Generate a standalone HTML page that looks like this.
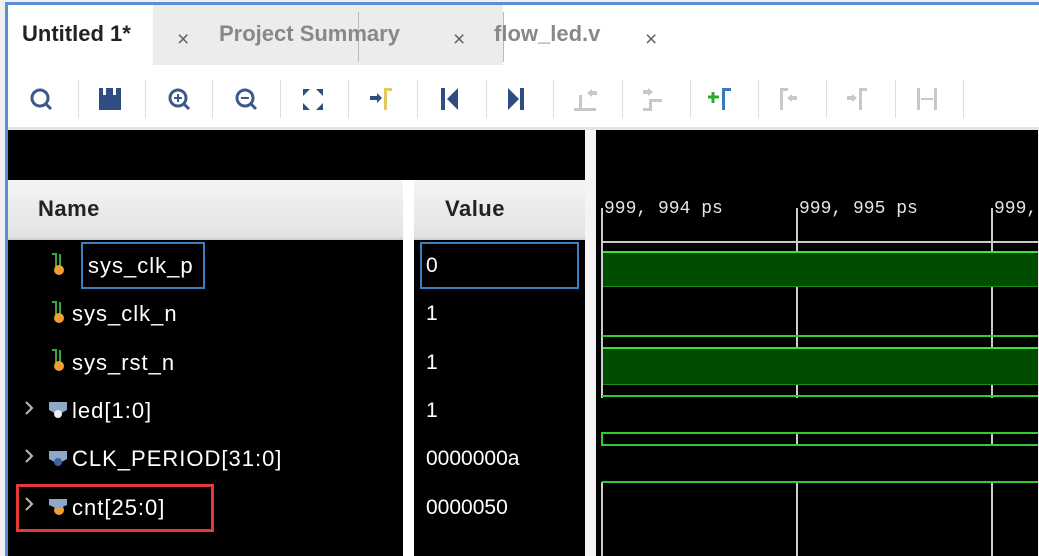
<!DOCTYPE html>
<html><head><meta charset="utf-8"><style>
*{margin:0;padding:0;box-sizing:border-box}
body{width:1039px;height:556px;overflow:hidden;background:#f0f0f0;font-family:"Liberation Sans",Arial,sans-serif;position:relative}
.a{position:absolute}
.tab{position:absolute;top:5px;height:60px;font-size:22px;line-height:58px;font-weight:bold;white-space:nowrap}
.x{position:absolute;font-size:21px;color:#666;top:28px}
.sep{position:absolute;top:80px;width:1px;height:38px;background:#ddd}
.row{position:absolute;font-size:22px;letter-spacing:1px;color:#fff;height:30px;line-height:30px;white-space:nowrap}
.v{position:absolute;left:426px;font-size:21px;color:#fff}
.gl{position:absolute;background:#2ecc2e;height:2px}
.vl{position:absolute;width:2px;background:#ccc}
.t{position:absolute;top:199px;font-family:'Liberation Mono',monospace;font-size:18px;color:#e4e4e4;white-space:nowrap}
</style></head><body>
<div class="a" style="left:5px;top:2px;width:1034px;height:3px;background:#5b8fd5"></div>
<div class="a" style="left:5px;top:2px;width:3px;height:554px;background:#5b8fd5"></div>
<!-- tabs -->
<div class="a" style="left:8px;top:5px;width:1031px;height:60px;background:#fff"></div>
<div class="a" style="left:153px;top:5px;width:350px;height:60px;background:#ececec"></div>
<div class="a" style="left:358px;top:12px;width:1px;height:50px;background:#bbb"></div>
<div class="a" style="left:503px;top:12px;width:1px;height:50px;background:#bbb"></div>
<div class="tab" style="left:22px;color:#222">Untitled 1*</div>
<div class="tab" style="left:219px;color:#888">Project Summary</div>
<div class="tab" style="left:494px;color:#888">flow_led.v</div>
<div class="x" style="left:177px">×</div>
<div class="x" style="left:453px">×</div>
<div class="x" style="left:645px">×</div>
<!-- toolbar -->
<div class="a" style="left:8px;top:65px;width:1031px;height:63px;background:#fff"></div>
<div class="a" style="left:8px;top:127px;width:1031px;height:3px;background:#e4e4e4"></div>
<svg class="a" style="left:0;top:80px" width="1039" height="40" viewBox="0 80 1039 40">
<g fill="none" stroke="#3b5a8c" stroke-width="3">
<circle cx="40" cy="98" r="8"/><line x1="46" y1="104" x2="51" y2="109"/>
<circle cx="178" cy="98" r="8"/><line x1="184" y1="104" x2="189" y2="109"/>
<circle cx="245" cy="98" r="8"/><line x1="251" y1="104" x2="256" y2="109"/>
</g>
<path d="M174 98h8M178 94v8M241 98h8" stroke="#3b5a8c" stroke-width="2"/>
<path d="M99 88h22v22h-22z" fill="#2f4d80"/><rect x="103" y="88" width="3" height="7" fill="#fff"/><rect x="113" y="88" width="3" height="7" fill="#fff"/>
<g fill="#2f4d80"><path d="M303 89h7l-7 7zM323 89h-7l7 7zM303 110h7l-7-7zM323 110h-7l7-7z"/></g>
<path d="M370 96h7v-3l5 5-5 5v-3h-7z" fill="#2f4d80"/><rect x="384" y="88" width="3" height="22" fill="#e5c85c"/><rect x="384" y="88" width="8" height="3" fill="#e5c85c"/>
<rect x="441" y="88" width="4" height="22" fill="#2f4d80"/><path d="M458 88v22l-11-11z" fill="#2f4d80"/>
<path d="M508 88v22l11-11z" fill="#2f4d80"/><rect x="520" y="88" width="4" height="22" fill="#2f4d80"/>
<g fill="#c8c8c8"><path d="M574 108h22v3h-22zM579 95h3v14h-3zM587 93l5-4v8zM591 91h6v4h-6z"/>
<path d="M643 108h8v3h-8zM649 99h3v12h-3zM650 99h12v3h-12zM643 90h6v4h-6zM648 88l5 4-5 4z"/>
<path d="M780 88h3v22h-3zM780 88h8v3h-8zM787 98l5-4v8zM791 96h6v4h-6z"/>
<path d="M847 96h6v4h-6zM852 94l5 4-5 4zM859 88h3v22h-3zM859 88h8v3h-8z"/>
<path d="M917 88h3v22h-3zM934 88h3v22h-3zM921 98h12v2h-12z"/></g>
<path d="M713 92v11M708 97h11" stroke="#2faa2f" stroke-width="3"/><path d="M722 88h9v3h-6v19h-3z" fill="#3a78c0"/>
</svg>
<div class="sep" style="left:78px"></div><div class="sep" style="left:145px"></div><div class="sep" style="left:212px"></div>
<div class="sep" style="left:280px"></div><div class="sep" style="left:348px"></div><div class="sep" style="left:417px"></div>
<div class="sep" style="left:486px"></div><div class="sep" style="left:553px"></div><div class="sep" style="left:622px"></div>
<div class="sep" style="left:690px"></div><div class="sep" style="left:758px"></div><div class="sep" style="left:826px"></div>
<div class="sep" style="left:895px"></div><div class="sep" style="left:963px"></div>
<!-- left panels -->
<div class="a" style="left:8px;top:130px;width:577px;height:426px;background:#000"></div>
<div class="a" style="left:585px;top:130px;width:11px;height:426px;background:#f4f4f4"></div>
<div class="a" style="left:8px;top:180px;width:395px;height:60px;background:linear-gradient(#f4f4f4,#e2e2e2);border-bottom:2px solid #d0d0d0"></div>
<div class="a" style="left:403px;top:180px;width:11px;height:376px;background:#fff"></div>
<div class="a" style="left:414px;top:180px;width:171px;height:60px;background:linear-gradient(#f4f4f4,#e2e2e2);border-bottom:2px solid #d0d0d0"></div>
<div class="a" style="left:38px;top:196px;font-size:22px;font-weight:bold;color:#222;letter-spacing:0.5px">Name</div>
<div class="a" style="left:445px;top:196px;font-size:22px;font-weight:bold;color:#222;letter-spacing:0.5px">Value</div>
<div class="a" style="left:81px;top:242px;width:124px;height:47px;border:2px solid #3a7fc0"></div>
<div class="a" style="left:420px;top:242px;width:159px;height:47px;border:2px solid #3a7fc0"></div>
<div class="a" style="left:16px;top:484px;width:198px;height:48px;border:3px solid #e53935"></div>
<svg class="a" style="left:20px;top:250px" width="60" height="280">
<g stroke="#3aa83a" stroke-width="2" fill="none"><path d="M32 4h4v14M40 4v14"/><path d="M32 52h4v14M40 52v14"/><path d="M32 100h4v14M40 100v14"/></g>
<g fill="#f0a030"><circle cx="39" cy="20" r="5"/><circle cx="39" cy="68" r="5"/><circle cx="39" cy="116" r="5"/><circle cx="39" cy="260" r="5"/></g>
<g fill="#8fa8c8"><path d="M29 152h18v8l-9 5-9-5z"/><path d="M29 201h18v8l-9 5-9-5z"/><path d="M29 249h18v6l-9 4-9-4z"/></g>
<circle cx="38" cy="164" r="4" fill="#eee"/><circle cx="38" cy="212" r="4" fill="#4060a0"/>
<g stroke="#bbb" stroke-width="2" fill="none"><path d="M6 152l6 6-6 6M6 200l6 6-6 6M6 248l6 6-6 6"/></g>
</svg>
<div class="row" style="left:88px;top:251px">sys_clk_p</div>
<div class="row" style="left:72px;top:299px">sys_clk_n</div>
<div class="row" style="left:72px;top:348px">sys_rst_n</div>
<div class="row" style="left:72px;top:396px">led[1:0]</div>
<div class="row" style="left:72px;top:444px">CLK_PERIOD[31:0]</div>
<div class="row" style="left:72px;top:493px">cnt[25:0]</div>
<div class="v" style="top:254px">0</div>
<div class="v" style="top:302px">1</div>
<div class="v" style="top:351px">1</div>
<div class="v" style="top:399px">1</div>
<div class="v" style="top:447px">0000000a</div>
<div class="v" style="top:496px">0000050</div>
<!-- wave -->
<div class="a" style="left:596px;top:130px;width:442px;height:426px;background:#000"></div>
<div class="a" style="left:1038px;top:130px;width:1px;height:426px;background:#eee"></div>
<div class="t" style="left:604px">999, 994 ps</div>
<div class="t" style="left:799px">999, 995 ps</div>
<div class="t" style="left:994px">999,</div>
<div class="a" style="left:602px;top:241px;width:436px;height:2px;background:#ccc"></div>
<div class="vl" style="left:601px;top:208px;height:190px"></div>
<div class="vl" style="left:796px;top:208px;height:190px"></div>
<div class="vl" style="left:991px;top:208px;height:190px"></div>
<div class="vl" style="left:601px;top:433px;height:13px"></div><div class="vl" style="left:796px;top:433px;height:13px"></div><div class="vl" style="left:991px;top:433px;height:13px"></div>
<div class="vl" style="left:601px;top:482px;height:74px"></div><div class="vl" style="left:796px;top:482px;height:74px"></div><div class="vl" style="left:991px;top:482px;height:74px"></div>
<div class="a" style="left:603px;top:251px;width:435px;height:36px;background:#004d00;border-top:2px solid #3ee03e;border-bottom:1px solid #1a8a1a"></div>
<div class="gl" style="left:602px;top:335px;width:436px"></div>
<div class="a" style="left:603px;top:347px;width:435px;height:38px;background:#004d00;border-top:2px solid #3ee03e;border-bottom:1px solid #1a8a1a"></div>
<div class="gl" style="left:602px;top:395px;width:436px"></div>
<div class="gl" style="left:602px;top:432px;width:436px"></div>
<div class="gl" style="left:602px;top:444px;width:436px"></div>
<div class="a" style="left:601px;top:432px;width:2px;height:14px;background:#2ecc2e"></div>
<div class="gl" style="left:602px;top:481px;width:436px"></div>
</body></html>
